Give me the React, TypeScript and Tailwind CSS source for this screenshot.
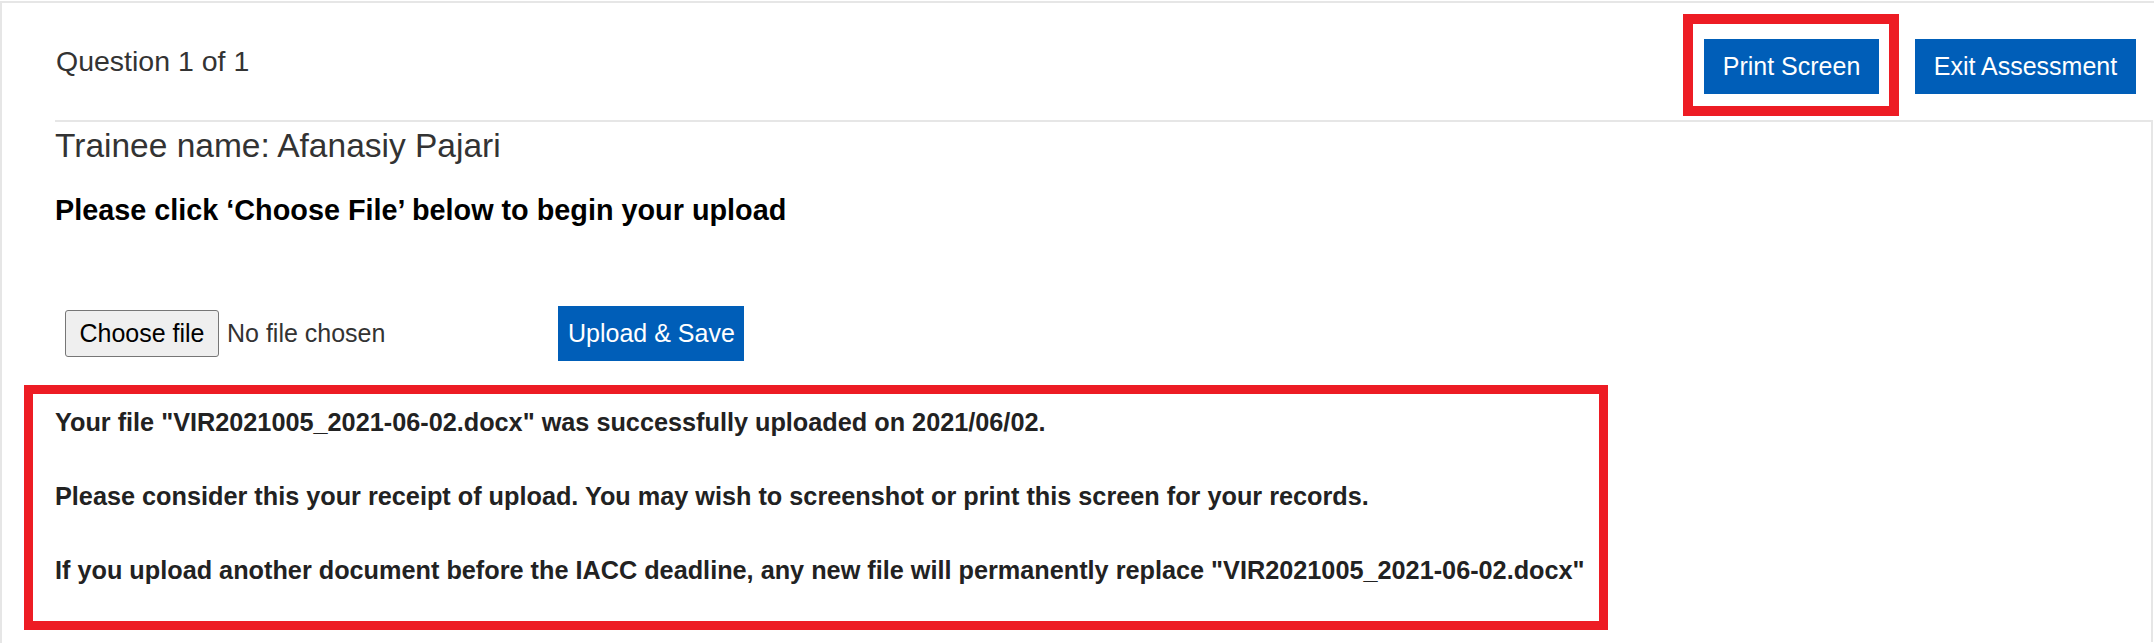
export default function App() {
  return (
    <div className="min-h-screen bg-white text-[#333] font-['Liberation_Sans',Arial,sans-serif] pt-px">
      <div className="border-t-2 border-l-2 border-[#e6e6e6] min-h-[642px]">
        {/* header */}
        <div className="flex justify-between h-[117px] pl-[54px] pr-[18px]">
          <div className="pt-[42px] text-[28.5px] leading-[32px] text-[#333]">Question 1 of 1</div>
          <div className="flex items-start gap-[16px] pt-[11px]">
            <div className="border-[10px] border-[#ed1c24] pt-[15px] pb-[12px] pl-[11px] pr-[10px]">
              <button className="w-[175px] h-[55px] bg-[#005eb8] text-white text-[25px]">Print Screen</button>
            </div>
            <button className="mt-[25px] w-[221px] h-[55px] bg-[#005eb8] text-white text-[25px]">Exit Assessment</button>
          </div>
        </div>

        {/* content */}
        <div className="ml-[53px] mr-px border-t-2 border-r-2 border-[#e6e6e6] min-h-[522px]">
          <div className="pt-[5px] text-[33.5px] leading-[38px] text-[#333]">Trainee name: Afanasiy Pajari</div>
          <div className="mt-[30px] text-[28.8px] leading-[30px] font-bold text-black">
            Please click ‘Choose File’ below to begin your upload
          </div>

          <div className="mt-[81px] flex items-center h-[55px]">
            <div className="ml-[10px] flex items-center">
              <button className="w-[154px] h-[47px] bg-[#efefef] border border-[#767676] rounded-[3px] text-[25px] text-black">
                Choose file
              </button>
              <span className="ml-[8px] text-[25px] text-[#333]">No file chosen</span>
            </div>
            <button className="ml-[173px] w-[186px] h-[55px] bg-[#005eb8] text-white text-[25px]">Upload &amp; Save</button>
          </div>

          <div className="mt-[24px] -ml-[31px] w-[1584px] border-[9px] border-[#ed1c24] pl-[22px] pt-[13px] pb-[36px] text-[25.25px] leading-[30px] font-bold text-[#222]">
            <p>Your file "VIR2021005_2021-06-02.docx" was successfully uploaded on 2021/06/02.</p>
            <p className="mt-[44px]">
              Please consider this your receipt of upload. You may wish to screenshot or print this screen for your records.
            </p>
            <p className="mt-[44px]">
              If you upload another document before the IACC deadline, any new file will permanently replace "VIR2021005_2021-06-02.docx"
            </p>
          </div>
        </div>
      </div>
    </div>
  );
}
